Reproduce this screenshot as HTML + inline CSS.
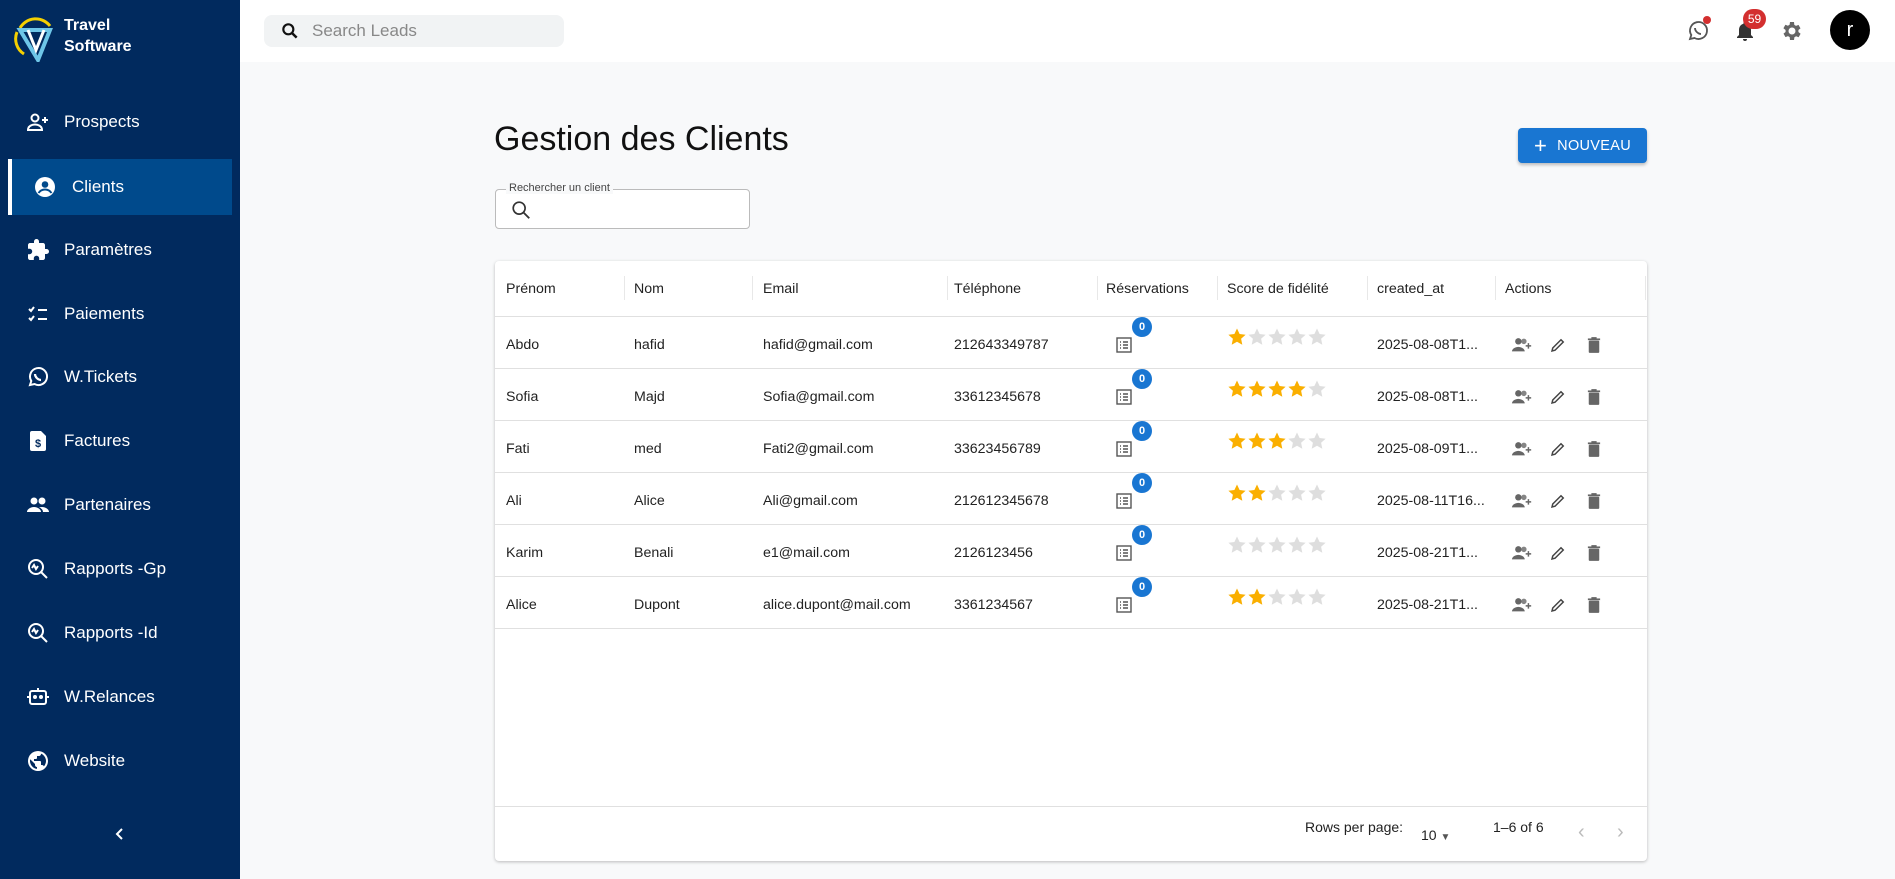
<!DOCTYPE html>
<html><head><meta charset="utf-8"><style>
*{box-sizing:border-box;margin:0;padding:0}
body{width:1895px;height:879px;overflow:hidden;font-family:"Liberation Sans",sans-serif;background:#f8f9fa;position:relative;color:#222}
.sb{position:absolute;left:0;top:0;width:240px;height:879px;background:#012a5e;color:#fff}
.logo{position:absolute;left:14px;top:14px}
.brand{position:absolute;left:64px;top:15px;font-weight:bold;font-size:16px;line-height:21px}
.item{position:absolute;left:8px;width:224px;height:56px;display:flex;align-items:center;font-size:17px}
.item svg{position:absolute;left:18px}
.item span{position:absolute;left:56px}
.item.act{background:#004a8c;border-left:4px solid #fff}
.item.act svg{left:21px}.item.act span{left:60px}
.top{position:absolute;left:240px;top:0;right:0;height:62px;background:#fff}
.sl{position:absolute;left:24px;top:15px;width:300px;height:32px;background:#f1f3f4;border-radius:8px;font-size:17px;color:#888;display:flex;align-items:center;padding-left:48px}
.sl svg{position:absolute;left:16px}
h1{position:absolute;left:494px;top:120px;font-weight:normal;font-size:34px;color:#111}
.btn{position:absolute;left:1518px;top:128px;width:129px;height:35px;background:#1976d2;color:#fff;border-radius:4px;font-size:14.5px;display:flex;align-items:center;justify-content:center;gap:10px;box-shadow:0 2px 3px rgba(0,0,0,.25);letter-spacing:.3px}
.fld{position:absolute;left:495px;top:189px;width:255px;height:40px;border:1px solid #bbb;border-radius:4px;background:#fff}
.fld label{position:absolute;left:10px;top:-8px;background:#f8f9fa;font-size:11px;padding:0 3px;color:#444}
.tbl{position:absolute;left:495px;top:261px;width:1152px;height:600px;background:#fff;border-radius:4px;box-shadow:0 1px 3px rgba(0,0,0,.25)}
.row{position:absolute;left:0;width:1152px;height:52px;border-bottom:1px solid #e0e0e0;font-size:14.2px}
.row div{position:absolute;top:2px;height:52px;display:flex;align-items:center}
.hd div{font-size:14.2px;top:0}
.sep{position:absolute;top:15px;width:1px;height:24px;background:#e8e8e8}
.bdg{position:absolute;width:20px;height:20px;border-radius:10px;background:#1976d2;color:#fff;font-size:11px;font-weight:bold;display:flex;align-items:center;justify-content:center;top:0}
.ft{position:absolute;left:0;top:545px;width:1152px;border-top:1px solid #e0e0e0;height:55px;font-size:14px}
</style></head><body>
<div class="sb">
<svg class="logo" width="42" height="48" viewBox="0 0 42 48"><path d="M6 14 A18 18 0 0 1 36 12" stroke="#f5d000" stroke-width="3" fill="none"/><path d="M3 18 A18 18 0 0 0 10 40" stroke="#f5d000" stroke-width="3" fill="none"/><path d="M6 16 L36 16 L24 46 Z" fill="none" stroke="#6ec6e8" stroke-width="4"/><path d="M14 16 L22 36 L30 16" fill="none" stroke="#fff" stroke-width="3"/></svg>
<div class="brand">Travel<br>Software</div>
<div class="item" style="top:94px"><svg width="24" height="24" viewBox="0 0 24 24" fill="none" stroke="#fff" stroke-width="2"><circle cx="9" cy="8" r="3.5"/><path d="M2 20c0-4 4-5.5 7-5.5s7 1.5 7 5.5z"/><path d="M19 7v6M16 10h6"/></svg><span>Prospects</span></div>
<div class="item act" style="top:159px"><svg width="24" height="24" viewBox="0 0 24 24"><circle cx="12" cy="12" r="10" fill="#fff"/><circle cx="12" cy="9.5" r="3.3" fill="#004a8c"/><path d="M5.5 18c2-3 4.5-3.5 6.5-3.5s4.5.5 6.5 3.5" stroke="#004a8c" stroke-width="2" fill="none"/></svg><span>Clients</span></div>
<div class="item" style="top:222px"><svg width="24" height="24" viewBox="0 0 24 24" fill="#fff"><path d="M20.5 11H19V7c0-1.1-.9-2-2-2h-4V3.5a2.5 2.5 0 0 0-5 0V5H4c-1.1 0-2 .9-2 2v3.8h1.5c1.5 0 2.7 1.2 2.7 2.7S5 16.2 3.5 16.2H2V20c0 1.1.9 2 2 2h3.8v-1.5c0-1.5 1.2-2.7 2.7-2.7s2.7 1.2 2.7 2.7V22H17c1.1 0 2-.9 2-2v-4h1.5a2.5 2.5 0 0 0 0-5z"/></svg><span>Paramètres</span></div>
<div class="item" style="top:286px"><svg width="24" height="24" viewBox="0 0 24 24" fill="none" stroke="#fff" stroke-width="2"><path d="M3 7l2 2 3-4M3 16l2 2 3-4M12 8h9M12 17h9"/></svg><span>Paiements</span></div>
<div class="item" style="top:349px"><svg width="24" height="24" viewBox="0 0 24 24" fill="none" stroke="#fff" stroke-width="2"><path d="M4 20l1.3-4A8.5 8.5 0 1 1 8.5 19z"/><path d="M9 9c0 3 3 6 6 6" stroke-width="2.2"/></svg><span>W.Tickets</span></div>
<div class="item" style="top:413px"><svg width="24" height="24" viewBox="0 0 24 24" fill="#fff"><path d="M6 2h9l5 5v13a2 2 0 0 1-2 2H6a2 2 0 0 1-2-2V4a2 2 0 0 1 2-2z"/><text x="12" y="18" font-size="11" font-weight="bold" text-anchor="middle" fill="#012a5e" font-family="Liberation Sans">$</text></svg><span>Factures</span></div>
<div class="item" style="top:477px"><svg width="24" height="24" viewBox="0 0 24 24" fill="#fff"><circle cx="8" cy="8" r="3.5"/><circle cx="16" cy="8" r="3.5"/><path d="M1 19c0-3 4-5 7-5s7 2 7 5zM13 14.3c1-.2 2-.3 3-.3 3 0 7 2 7 5h-6c0-2-1.5-3.7-4-4.7z"/></svg><span>Partenaires</span></div>
<div class="item" style="top:541px"><svg width="24" height="24" viewBox="0 0 24 24" fill="none" stroke="#fff" stroke-width="2"><circle cx="10" cy="10" r="7"/><path d="M15 15l6 6M6 11l2-3 2 4 2-3"/></svg><span>Rapports -Gp</span></div>
<div class="item" style="top:605px"><svg width="24" height="24" viewBox="0 0 24 24" fill="none" stroke="#fff" stroke-width="2"><circle cx="10" cy="10" r="7"/><path d="M15 15l6 6M6 11l2-3 2 4 2-3"/></svg><span>Rapports -Id</span></div>
<div class="item" style="top:669px"><svg width="24" height="24" viewBox="0 0 24 24" fill="none" stroke="#fff" stroke-width="2"><rect x="4" y="6" width="16" height="13" rx="2"/><path d="M12 3v3M1 12h3M20 12h3"/><circle cx="9" cy="12" r="1" fill="#fff"/><circle cx="15" cy="12" r="1" fill="#fff"/></svg><span>W.Relances</span></div>
<div class="item" style="top:733px"><svg width="24" height="24" viewBox="0 0 24 24" fill="#fff"><path d="M12 2a10 10 0 1 0 0 20 10 10 0 0 0 0-20zm-1 17.9A8 8 0 0 1 4.2 10.2L9 15v1c0 1.1.9 2 2 2zm6.9-2.5c-.3-.8-1-1.4-1.9-1.4h-1v-3c0-.6-.4-1-1-1H8v-2h2c.6 0 1-.4 1-1V7h2c1.1 0 2-.9 2-2v-.4a8 8 0 0 1 2.9 12.8z"/></svg><span>Website</span></div>
<svg style="position:absolute;left:112px;top:826px" width="16" height="16" viewBox="0 0 16 16"><path d="M10 3L5 8l5 5" stroke="#fff" stroke-width="2" fill="none"/></svg>
</div>
<div class="top">
<div class="sl"><svg width="20" height="20" viewBox="0 0 24 24"><circle cx="10" cy="10" r="6" stroke="#111" stroke-width="2.6" fill="none"/><path d="M14.5 14.5L20 20" stroke="#111" stroke-width="3"/></svg>Search Leads</div>
<svg style="position:absolute;left:1446px;top:19px" width="24" height="24" viewBox="0 0 24 24" fill="none" stroke="#555" stroke-width="1.8"><path d="M4 20l1.3-4A8.5 8.5 0 1 1 8.5 19z"/><path d="M9 9c0 3 3 6 6 6"/></svg>
<div style="position:absolute;left:1463px;top:16px;width:8px;height:8px;border-radius:4px;background:#d32f2f"></div>
<svg style="position:absolute;left:1493px;top:19px" width="24" height="24" viewBox="0 0 24 24" fill="#333"><path d="M12 22a2 2 0 0 0 2-2h-4a2 2 0 0 0 2 2zm6-6v-5c0-3.1-1.6-5.6-4.5-6.3V4a1.5 1.5 0 0 0-3 0v.7C7.6 5.4 6 7.9 6 11v5l-2 2v1h16v-1z"/></svg>
<div style="position:absolute;left:1503px;top:9px;height:20px;min-width:23px;border-radius:10px;background:#d32f2f;color:#fff;font-size:12px;display:flex;align-items:center;justify-content:center;padding:0 4px">59</div>
<svg style="position:absolute;left:1540px;top:19px" width="24" height="24" viewBox="0 0 24 24" fill="#666"><path d="M19.4 13a7.5 7.5 0 0 0 0-2l2.1-1.6-2-3.5-2.5 1a7.6 7.6 0 0 0-1.7-1L15 3h-4l-.4 2.7a7.6 7.6 0 0 0-1.7 1l-2.5-1-2 3.5L6.6 11a7.5 7.5 0 0 0 0 2l-2.1 1.6 2 3.5 2.5-1c.5.4 1.1.7 1.7 1L11 21h4l.4-2.7c.6-.3 1.2-.6 1.7-1l2.5 1 2-3.5zM13 15.5a3.5 3.5 0 1 1 0-7 3.5 3.5 0 0 1 0 7z" transform="translate(-1 0)"/></svg>
<div style="position:absolute;left:1590px;top:10px;width:40px;height:40px;border-radius:20px;background:#000;color:#fff;font-size:20px;display:flex;align-items:center;justify-content:center">r</div>
</div>
<h1>Gestion des Clients</h1>
<div class="btn"><span style="font-size:22px;font-weight:300;line-height:1">+</span>NOUVEAU</div>
<div class="fld"><label>Rechercher un client</label><svg style="position:absolute;left:14px;top:9px" width="22" height="22" viewBox="0 0 24 24"><circle cx="10" cy="10" r="6.5" stroke="#333" stroke-width="1.8" fill="none"/><path d="M15 15l6 6" stroke="#333" stroke-width="2"/></svg></div>
<div class="tbl">
<div class="row hd" style="top:0;height:56px"><div style="left:11px;height:56px">Prénom</div><div style="left:139px;height:56px">Nom</div><div style="left:268px;height:56px">Email</div><div style="left:459px;height:56px">Téléphone</div><div style="left:611px;height:56px">Réservations</div><div style="left:732px;height:56px">Score de fidélité</div><div style="left:882px;height:56px">created_at</div><div style="left:1010px;height:56px">Actions</div>
<span class="sep" style="left:129px"></span><span class="sep" style="left:257px"></span><span class="sep" style="left:452px"></span><span class="sep" style="left:602px"></span><span class="sep" style="left:722px"></span><span class="sep" style="left:872px"></span><span class="sep" style="left:1000px"></span><span class="sep" style="left:1150px"></span></div>
<div id="rows"></div>
<div class="ft"><span style="position:absolute;left:810px;top:12px">Rows per page:</span><span style="position:absolute;left:926px;top:20px">10 <span style="font-size:10px;color:#555">▼</span></span><span style="position:absolute;left:998px;top:12px">1–6 of 6</span><span style="position:absolute;left:1083px;top:14px;color:#bbb;font-size:20px">‹</span><span style="position:absolute;left:1122px;top:14px;color:#bbb;font-size:20px">›</span></div>
</div>
<script>
var d=[["Abdo","hafid","hafid@gmail.com","212643349787",1,"2025-08-08T1..."],["Sofia","Majd","Sofia@gmail.com","33612345678",4,"2025-08-08T1..."],["Fati","med","Fati2@gmail.com","33623456789",3,"2025-08-09T1..."],["Ali","Alice","Ali@gmail.com","212612345678",2,"2025-08-11T16..."],["Karim","Benali","e1@mail.com","2126123456",0,"2025-08-21T1..."],["Alice","Dupont","alice.dupont@mail.com","3361234567",2,"2025-08-21T1..."]];
var st='M10 1.5l2.6 5.5 6 .7-4.5 4.1 1.2 5.9L10 14.8 4.7 17.7l1.2-5.9L1.4 7.7l6-.7z';
var h="";d.forEach(function(r,i){var s='<svg width="100" height="20" viewBox="0 0 100 20">';for(var k=0;k<5;k++)s+='<path transform="translate('+(k*20)+' 0)" d="'+st+'" fill="'+(k<r[4]?"#faaf00":"#dedede")+'"/>';s+='</svg>';
h+='<div class="row" style="top:'+(56+i*52)+'px"><div style="left:11px">'+r[0]+'</div><div style="left:139px">'+r[1]+'</div><div style="left:268px">'+r[2]+'</div><div style="left:459px">'+r[3]+'</div>'+
'<div style="left:620px"><svg width="18" height="18" viewBox="0 0 18 18" fill="none" stroke="#555" stroke-width="1.4"><rect x="2" y="2" width="14" height="14"/><path d="M5 6h1M8 6h5M5 9h1M8 9h5M5 12h1M8 12h5"/></svg></div><span class="bdg" style="left:637px">0</span>'+
'<div style="left:732px;top:-6px">'+s+'</div><div style="left:882px">'+r[5]+'</div>'+
'<div style="left:1016px"><svg width="22" height="20" viewBox="0 0 24 20" fill="#666"><circle cx="8" cy="6" r="3.5"/><circle cx="14" cy="6" r="3" opacity=".8"/><path d="M1 17c0-3 4-5 7-5s7 2 7 5z"/><path d="M19 8v6M16 11h6" stroke="#666" stroke-width="1.6"/></svg></div>'+
'<div style="left:1054px"><svg width="18" height="18" viewBox="0 0 24 24" fill="none" stroke="#444" stroke-width="2"><path d="M4 20l1-4L16 5l3 3L8 19z"/></svg></div>'+
'<div style="left:1092px"><svg width="14" height="16" viewBox="0 0 16 18" fill="#666"><rect x="2" y="4" width="12" height="14" rx="1"/><rect x="1" y="1.5" width="14" height="2"/><rect x="5" y="0" width="6" height="2"/></svg></div></div>';});
document.getElementById("rows").innerHTML=h;
</script>
</body></html>
